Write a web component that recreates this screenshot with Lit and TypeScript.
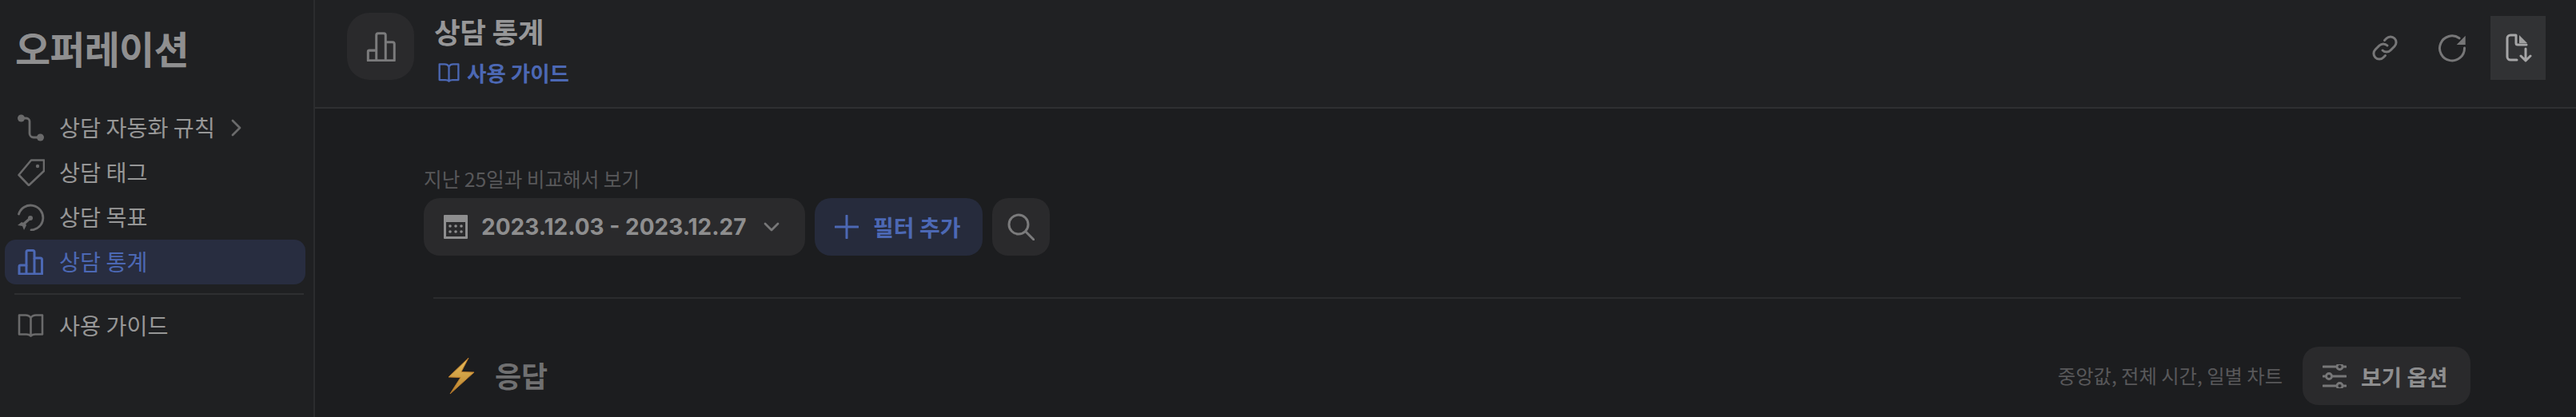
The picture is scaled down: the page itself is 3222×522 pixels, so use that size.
import { LitElement, html, css, svg } from "lit";
import { customElement } from "lit/decorators.js";

const ic = (w: number, h: number, body: unknown, cls = "") =>
  html`<svg class="ic ${cls}" width=${w} height=${h} viewBox="0 0 ${w} ${h}" fill="none" stroke="currentColor" stroke-linecap="round" stroke-linejoin="round">${body}</svg>`;

const bars = (w = 32, h = 32, sw = 3) =>
  html`<svg class="ic" width=${w} height=${h} viewBox="0 0 32 32" fill="none" stroke="currentColor" stroke-width=${sw} stroke-linejoin="round">
    <path d="M2 31V21.500a1.500 1.500 0 0 1 1.500-1.500H11V3.500A2 2 0 0 1 13 1.500h6a2 2 0 0 1 2 2V11h7.500a2 2 0 0 1 2 2v18z" />
    <path d="M11 20v11M21 11v20" />
  </svg>`;

const book = (w = 33, h = 30, sw = 2.6) =>
  html`<svg class="ic" width=${w} height=${h} viewBox="0 0 33 30" fill="none" stroke="currentColor" stroke-width=${sw} stroke-linejoin="round" stroke-linecap="round">
    <path d="M16.500 5V27M16.500 5C15 2.500 13 1.500 10 1.500H2v24h9c2.500 0 4.200.6 5.500 2 1.300-1.400 3-2 5.500-2h9v-24h-8c-3 0-5 1-6.500 3.500z" />
  </svg>`;

@customElement("app-root")
export class AppRoot extends LitElement {
  static styles = css`
    :host {
      display: grid;
      grid-template-columns: 394px 1fr;
      height: 522px;
      overflow: hidden;
      font-family: "Noto Sans CJK KR", "Noto Sans", sans-serif;
      background: #1c1d1f;
    }
    .ic { display: block; flex: none; }
    .side {
      background: #1f2022;
      border-right: 2px solid #2b2c2e;
      padding: 0 10px 0 6px;
    }
    .brand {
      font-size: 48px;
      font-weight: 700;
      line-height: 60px;
      letter-spacing: -0.8px;
      color: #8f8f90;
      padding: 29px 0 0 13px;
      height: 132px;
      box-sizing: border-box;
    }
    .item {
      display: flex;
      align-items: center;
      height: 56px;
      border-radius: 14px;
      padding-left: 16px;
      font-size: 28.300px;
      color: #979797;
    }
    .item .ic { color: #6a6a6b; }
    .item .ico { width: 52px; flex: none; display: flex; }
    .item .tx { padding-bottom: 3px; }
    .item.on { background: #282d40; color: #4c68b4; }
    .item.on .ic { color: #4c68b4; }
    .item .chev { margin-left: 20px; }
    .sep {
      height: 2px;
      background: #2e2f31;
      margin: 11px 2px 11px 12px;
    }
    .main { display: flex; flex-direction: column; min-width: 0; }
    .head {
      height: 136px;
      flex: none;
      box-sizing: border-box;
      background: #202123;
      border-bottom: 2px solid #2e2f31;
      display: flex;
      align-items: flex-start;
      padding: 16px 38px 0 40px;
    }
    .tile {
      width: 84px;
      height: 84px;
      border-radius: 28px;
      background: #2a2a2c;
      color: #7b7b7c;
      display: flex;
      align-items: center;
      justify-content: center;
      flex: none;
    }
    .titles { margin-left: 25px; flex: 1; }
    .ttl {
      font-size: 35.500px;
      font-weight: 700;
      line-height: 40px;
      margin-top: 3px;
      color: #979798;
      letter-spacing: -0.3px;
    }
    .guide {
      display: flex;
      align-items: center;
      gap: 9px;
      margin: 13px 0 0 5px;
      font-size: 26.500px;
      line-height: 38px;
      font-weight: 700;
      color: #4c68b4;
    }
    .acts { display: flex; align-items: center; margin-top: 4px; }
    .acts .act { color: #777778; display: flex; justify-content: center; align-items: center; }
    .a1 { width: 84px; height: 80px; }
    .dl { width: 69px; height: 80px; background: #313234; color: #a6a6a7 !important; margin-left: 6px; }
    .body { padding: 70px 144px 0 136px; flex: 1; }
    .lbl { font-size: 24.600px; line-height: 34px; color: #58585a; }
    .tools { display: flex; gap: 12px; margin-top: 8px; }
    .btn {
      height: 72px;
      border-radius: 20px;
      background: #2a2a2c;
      display: flex;
      align-items: center;
      box-sizing: border-box;
      color: #8e8e8f;
      font-weight: 700;
      font-size: 28px;
      flex: none;
    }
    .date { width: 477px; padding-left: 25px; font-family: Inter, "Noto Sans", sans-serif; font-size: 28px; }
    .date .dt { margin-left: 17px; }
    .date .cv { margin-left: 22px; color: #777778; }
    .filter { width: 210px; padding-left: 25px; background: #262b3c; color: #4c68b4; gap: 18px; }
    .search { width: 72px; justify-content: center; color: #7b7b7c; }
    .rule { height: 2px; background: #2b2c2e; margin: 52px 0 0 12px; }
    .sec { display: flex; align-items: center; margin-top: 60px; }
    .bolt { margin-left: 30px; }
    .sect { font-size: 36px; font-weight: 700; color: #707071; margin-left: 25px; line-height: 50px; flex: 1; padding-bottom: 3px; }
    .note { font-size: 24.300px; color: #58585a; margin-right: 25px; padding-bottom: 3px; }
    .opt { width: 210px; height: 73px; padding-left: 25px; gap: 18px; font-size: 27.800px; margin-right: -12px; }
    .opt .ic { color: #777778; }
  `;

  render() {
    return html`
      <aside class="side">
        <div class="brand">오퍼레이션</div>
        <div class="item">
          <span class="ico">${ic(34, 34, svg`
            <circle cx="4.500" cy="5" r="4.500" fill="currentColor" stroke="none"/>
            <circle cx="28.500" cy="29" r="4.500" fill="currentColor" stroke="none"/>
            <path stroke-width="2.800" d="M4.500 5h6.500a4 4 0 0 1 4 4v15a5 5 0 0 0 5 5h8"/>`)}</span>
          <span class="tx">상담 자동화 규칙</span>
          <span class="chev">${ic(14, 22, svg`<path stroke-width="2.800" d="M2 2l9 9-9 9"/>`)}</span>
        </div>
        <div class="item">
          <span class="ico">${ic(34, 34, svg`
            <path stroke-width="2.600" d="M33 1.500V15L14 33 1.500 20 17 1.500z"/>
            <circle cx="25" cy="9" r="2.200" fill="currentColor" stroke="none"/>`)}</span>
          <span class="tx">상담 태그</span>
        </div>
        <div class="item">
          <span class="ico">${ic(34, 34, svg`
            <path stroke-width="2.800" d="M1.500 13A15.500 15.500 0 1 1 17 33"/>
            <path stroke-width="3.200" d="M16 18L7 26"/>
            <circle cx="16" cy="18" r="3" fill="currentColor" stroke="none"/>
            <path fill="currentColor" stroke="none" d="M0 27L5 23L10 25L11 27L8 33L6 28z"/>`)}</span>
          <span class="tx">상담 목표</span>
        </div>
        <div class="item on">
          <span class="ico">${bars()}</span>
          <span class="tx">상담 통계</span>
        </div>
        <div class="sep"></div>
        <div class="item">
          <span class="ico">${book()}</span>
          <span class="tx">사용 가이드</span>
        </div>
      </aside>
      <section class="main">
        <header class="head">
          <div class="tile">${bars(37, 37, 2.6)}</div>
          <div class="titles">
            <div class="ttl">상담 통계</div>
            <div class="guide">${book(27, 25, 2.8)}사용 가이드</div>
          </div>
          <div class="acts">
            <div class="act a1">${ic(34, 34, svg`
              <path stroke-width="3" d="M14 20a7 7 0 0 0 10 0l5-5a7 7 0 0 0-10-10l-2.500 2.500"/>
              <path stroke-width="3" d="M20 14a7 7 0 0 0-10 0l-5 5a7 7 0 0 0 10 10l2.500-2.500"/>`)}</div>
            <div class="act a1">${ic(36, 36, svg`
              <path stroke-width="3" d="M33.500 18A15.500 15.500 0 1 1 27 5.800"/>
              <path fill="currentColor" stroke="none" d="M34.700 2.700V14H23.700z"/>`)}</div>
            <div class="act dl">${ic(34, 36, svg`
              <path stroke-width="3" d="M15 33H7a4 4 0 0 1-4-4V6a4 4 0 0 1 4-4h7v10a2 2 0 0 0 2 2h11"/>
              <path fill="currentColor" stroke="none" d="M18 2l10 10H18z" opacity=".95"/>
              <path stroke-width="3" d="M26 19v14M20 28l6 6 6-6"/>`)}</div>
          </div>
        </header>
        <div class="body">
          <div class="lbl">지난 25일과 비교해서 보기</div>
          <div class="tools">
            <div class="btn date">
              ${ic(30, 30, svg`
                <path fill="currentColor" stroke="none" fill-rule="evenodd" d="M1 0h28a1 1 0 0 1 1 1v28a1 1 0 0 1-1 1H1a1 1 0 0 1-1-1V1a1 1 0 0 1 1-1zM3 9v18h24V9z"/>
                <g fill="currentColor" stroke="none">
                  <circle cx="8" cy="14" r="1.800"/><circle cx="15" cy="14" r="1.800"/><circle cx="22" cy="14" r="1.800"/>
                  <circle cx="8" cy="21" r="1.800"/><circle cx="15" cy="21" r="1.800"/><circle cx="22" cy="21" r="1.800"/>
                </g>`)}
              <span class="dt">2023.12.03 - 2023.12.27</span>
              <span class="cv">${ic(20, 12, svg`<path stroke-width="2.800" d="M2 2l8 8 8-8"/>`)}</span>
            </div>
            <div class="btn filter">
              ${ic(30, 30, svg`<path stroke-width="3" d="M15 1v28M1 15h28"/>`)}
              필터 추가
            </div>
            <div class="btn search">
              ${ic(34, 34, svg`<circle cx="14" cy="14" r="12" stroke-width="3"/><path stroke-width="3" d="M23 23l10 10"/>`)}
            </div>
          </div>
          <div class="rule"></div>
          <div class="sec">
            <svg class="ic bolt" width="34" height="47" viewBox="0 0 34 47">
              <defs><linearGradient id="g" x1="0" y1="0" x2="0" y2="1"><stop offset="0" stop-color="#e9bf5c"/><stop offset="1" stop-color="#b8822e"/></linearGradient></defs>
              <path fill="url(#g)" stroke="#b8792a" stroke-width="1" d="M26 1L1 25l15 .5L3 46l30-27-16-.5z"/>
            </svg>
            <div class="sect">응답</div>
            <div class="note">중앙값, 전체 시간, 일별 차트</div>
            <div class="btn opt">
              ${ic(30, 30, svg`
                <path stroke-width="3" d="M1 3h16M26 3h3M1 15h3M12 15h17M1 27h16M26 27h3"/>
                <circle cx="21.500" cy="3" r="3.500" stroke-width="2.800"/>
                <circle cx="8" cy="15" r="3.500" stroke-width="2.800"/>
                <circle cx="21.500" cy="27" r="3.500" stroke-width="2.800"/>`)}
              보기 옵션
            </div>
          </div>
        </div>
      </section>
    `;
  }
}
